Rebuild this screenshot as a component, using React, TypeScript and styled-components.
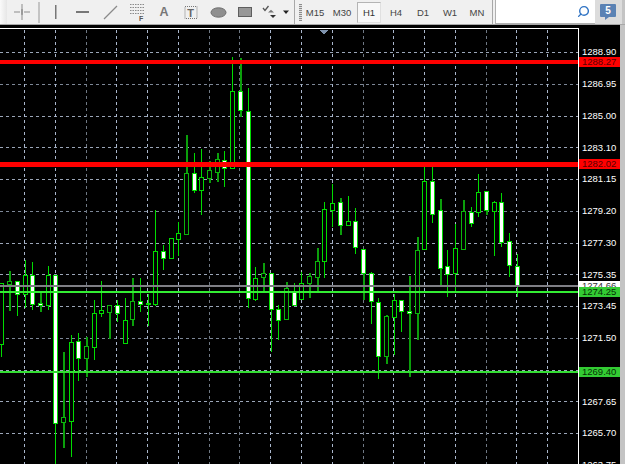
import React from "react";
import styled, { createGlobalStyle } from "styled-components";
import { Search } from "lucide-react";

const GlobalStyle = createGlobalStyle`
  html, body {
    margin: 0;
    padding: 0;
    background: #000;
  }
  body {
    font-family: "Liberation Sans", Arial, sans-serif;
  }
`;

const Page = styled.div`
  width: 625px;
  height: 464px;
  overflow: hidden;
  display: flex;
  flex-direction: column;
  background: #000;
`;

const Toolbar = styled.header`
  flex: none;
  height: 24px;
  display: flex;
  align-items: stretch;
  background: #f0f0f0;
  border-bottom: 1px solid #a8a8a8;
`;

const Gripper = styled.div`
  width: 7px;
  margin-right: 1px;
  background: linear-gradient(90deg, #fafafa, #e6e6e6);
`;

const ToolButton = styled.div<{ $w?: number }>`
  flex: none;
  width: ${({ $w }) => $w ?? 27}px;
  display: flex;
  align-items: center;
  justify-content: center;
`;

const Divider = styled.div`
  flex: none;
  width: 2px;
  margin: 2px 2.5px 1px 3px;
  background: #c4c4c4;
`;

const EdgeDivider = styled.div`
  flex: none;
  width: 1px;
  margin: 0 2px 0 1px;
  background: #a8a8a8;
`;

const DragDots = styled.div`
  flex: none;
  width: 3px;
  margin: 4px 0 3px 2px;
  background: repeating-linear-gradient(180deg, #8c8c8c 0 1px, #e2e2e2 1px 2px);
`;

const Period = styled.div<{ $active?: boolean }>`
  flex: none;
  width: 27px;
  display: flex;
  align-items: center;
  justify-content: center;
  font-size: 9.5px;
  color: #444;
  box-sizing: border-box;
  ${({ $active }) =>
    $active &&
    `
    width: 24px;
    margin: 2px 1.5px 1px;
    background: #f8f8f8;
    border: 1px solid #b4b4b4;
    border-right-color: #e0e0e0;
    border-bottom-color: #e0e0e0;
    color: #333;
  `}
`;

const SearchBox = styled.div`
  flex: none;
  width: 100px;
  box-sizing: border-box;
  display: flex;
  align-items: center;
  justify-content: flex-end;
  padding-right: 5px;
  background: #fff;
  border-left: 1px solid #b0b0b0;
  border-bottom: 1px solid #b0b0b0;
  color: #2f73c4;
`;

const NotifyButton = styled.div`
  flex: none;
  width: 27px;
  display: flex;
  align-items: center;
  justify-content: center;
  background: #dcdcdc;
`;

const Bubble = styled.div`
  position: relative;
  width: 16px;
  height: 13px;
  margin-bottom: 3px;
  border-radius: 1px;
  background: #5a82b4;
  color: #fff;
  font-size: 10px;
  font-weight: 700;
  line-height: 13px;
  text-align: center;
  &::after {
    content: "";
    position: absolute;
    left: 5px;
    bottom: -3px;
    border-top: 3px solid #5a82b4;
    border-right: 4px solid transparent;
  }
`;

const SideStrip = styled.div`
  flex: 1;
  background: #c4c4c4;
`;

const Workspace = styled.main`
  flex: 1;
  min-height: 0;
  display: flex;
  background: #000;
`;

const Plot = styled.div`
  flex: none;
  width: 579px;
  box-sizing: border-box;
  margin-top: 3px;
  border-top: 1px solid #fff;
  border-right: 1px solid #fff;
  overflow: hidden;
  svg {
    display: block;
  }
`;

const PriceAxis = styled.aside`
  position: relative;
  flex: none;
  width: 41px;
  box-sizing: border-box;
  padding-top: 11.1px;
  overflow: hidden;
`;

const Tick = styled.div`
  height: 31.75px;
  display: flex;
  align-items: center;
  padding-left: 3px;
  color: #fff;
  font-size: 9.5px;
`;

const PriceTag = styled.div<{ $bg: string; $fg: string }>`
  position: absolute;
  left: 0;
  right: 0;
  height: 10px;
  padding-left: 3px;
  background: ${({ $bg }) => $bg};
  color: ${({ $fg }) => $fg};
  font-size: 9.5px;
  line-height: 10px;
`;

const ScrollStrip = styled.div`
  flex: 1;
  background: #c4c4c4;
`;

const CrossIcon = () => (
  <svg width="16" height="16" viewBox="0 0 16 16" fill="none" stroke="#8c8c8c">
    <path d="M0 8H6M10 8H16M8 0V6M8 10V16" strokeWidth="1" />
    <path d="M8 5.5V10.5" stroke="#444" />
  </svg>
);

const VLineIcon = () => (
  <svg width="4" height="14" viewBox="0 0 4 14">
    <rect x="1" width="1.5" height="14" fill="#777" />
  </svg>
);

const HLineIcon = () => (
  <svg width="14" height="4" viewBox="0 0 14 4">
    <rect y="1" width="13" height="2" fill="#777" />
  </svg>
);

const TrendIcon = () => (
  <svg width="15" height="15" viewBox="0 0 15 15">
    <path d="M1 14L14 1" stroke="#8a8a8a" strokeWidth="1.3" />
  </svg>
);

const FiboIcon = () => (
  <svg width="16" height="18" viewBox="0 0 16 18">
    <path d="M1 1.5H15M1 4.5H15M1 7.5H15M1 10.5H15" stroke="#8a8a8a" strokeDasharray="1.5 1" />
    <text x="10" y="17.5" fontSize="7" fontWeight="700" fill="#555" fontFamily="Liberation Sans">
      F
    </text>
  </svg>
);

const LetterA = styled.span`
  font-size: 12.5px;
  font-weight: 700;
  color: #777;
`;

const LabelIcon = () => (
  <svg width="14" height="15" viewBox="0 0 14 15">
    <rect x="1" y="1.5" width="12" height="12" fill="none" stroke="#777" strokeDasharray="1 1" />
    <text x="3.3" y="11.5" fontSize="11" fontWeight="700" fill="#666" fontFamily="Liberation Sans">
      T
    </text>
  </svg>
);

const EllipseIcon = () => (
  <svg width="17" height="11" viewBox="0 0 17 11">
    <ellipse cx="8.5" cy="5.5" rx="7.5" ry="4.7" fill="#8f8f8f" stroke="#6e6e6e" />
  </svg>
);

const RectIcon = () => (
  <svg width="14" height="10" viewBox="0 0 14 10">
    <rect x="0.5" y="0.5" width="13" height="9" fill="#979797" stroke="#5e5e5e" />
  </svg>
);

const ArrowsIcon = () => (
  <svg width="28" height="14" viewBox="0 0 28 14">
    <path d="M1 3L3 5.5L6.5 1" fill="none" stroke="#555" strokeWidth="1.3" />
    <path d="M6 7.5L9 4.8L12 7.5Z" fill="#777" />
    <path d="M8 10L11 13L14 10Z" fill="#333" />
    <path d="M21 5.5H27L24 9Z" fill="#222" />
  </svg>
);

const verticals: [number, boolean][] = [
  [24.5, false], [55.5, false], [86, true], [116.5, false], [147.5, false], [178.5, false],
  [209, true], [239.5, true], [270.5, false], [301.5, false], [332, false], [363, true],
  [393.5, false], [424.5, false], [455, false], [486, true], [516.5, false], [547.5, false],
];

// [wick top, wick bottom, body top, body bottom, white body, dim wick]
type Candle = [number, number, number, number, number, number];
const candles: Candle[] = [
  [283, 357, 283, 344, 0, 0], [271, 311, 281, 284, 0, 1], [281, 316, 281, 294, 1, 0],
  [260, 308, 275, 294, 0, 0], [262, 310, 275, 304, 1, 0], [293, 312, 303, 305, 1, 1],
  [266, 310, 275, 305, 0, 0], [275, 464, 275, 423, 1, 0], [352, 448, 417, 422, 0, 1],
  [335, 457, 342, 421, 0, 0], [333, 381, 341, 358, 1, 0], [337, 377, 346, 358, 0, 1],
  [300, 360, 313, 347, 0, 0], [281, 317, 310, 313, 0, 0], [305, 339, 305, 312, 0, 1],
  [300, 322, 305, 313, 1, 0], [298, 344, 320, 343, 0, 0], [278, 326, 301, 319, 0, 1],
  [278, 312, 301, 304, 1, 0], [294, 326, 303, 303, 0, 0], [210, 306, 251, 304, 0, 0],
  [245, 270, 251, 258, 1, 0], [238, 258, 238, 258, 0, 0], [222, 256, 233, 239, 0, 0],
  [135, 235, 173, 234, 0, 1], [153, 193, 173, 190, 1, 0], [149, 215, 177, 190, 0, 0],
  [161, 183, 170, 178, 0, 1], [153, 182, 159, 172, 0, 1], [151, 187, 160, 168, 1, 0],
  [57, 168, 91, 168, 0, 0], [58, 117, 91, 110, 1, 1], [88, 308, 111, 298, 1, 0],
  [267, 301, 278, 299, 0, 0], [263, 292, 273, 277, 0, 1], [273, 352, 273, 309, 1, 0],
  [305, 340, 309, 320, 1, 0], [282, 319, 288, 319, 0, 1], [283, 305, 291, 305, 1, 0],
  [272, 299, 283, 299, 0, 0], [273, 298, 276, 283, 0, 1], [248, 292, 261, 277, 0, 1],
  [202, 278, 209, 261, 0, 0], [184, 227, 203, 210, 0, 0], [198, 235, 202, 225, 1, 1],
  [196, 225, 221, 225, 0, 0], [208, 254, 221, 247, 1, 0], [249, 300, 249, 273, 1, 1],
  [272, 324, 273, 301, 1, 0], [298, 379, 302, 356, 1, 0], [315, 364, 316, 356, 0, 1],
  [294, 355, 300, 317, 0, 0], [300, 332, 300, 311, 1, 0], [276, 377, 311, 313, 1, 1],
  [237, 340, 250, 313, 0, 1], [167, 250, 181, 249, 0, 0], [167, 223, 181, 214, 1, 0],
  [199, 287, 210, 268, 1, 1], [250, 297, 266, 274, 1, 0], [224, 292, 248, 273, 0, 0],
  [200, 250, 211, 249, 0, 1], [207, 227, 212, 223, 1, 0], [174, 217, 192, 212, 0, 0],
  [191, 215, 191, 210, 1, 1], [201, 256, 202, 211, 0, 0], [193, 247, 202, 242, 1, 0],
  [233, 277, 241, 265, 1, 0], [254, 297, 266, 286, 1, 0],
];

// the row at 1269.xx sits under its price tag, so it stays empty
const ticks = [
  "1288.90", "1286.95", "1285.00", "1283.10", "1281.15", "1279.20", "1277.30",
  "1275.35", "1273.45", "1271.50", "", "1267.65", "1265.70", "1263.75",
];

const tags = [
  { price: "1288.27", y: 62, bg: "#ff0000", fg: "#5a0000" },
  { price: "1282.02", y: 164, bg: "#ff0000", fg: "#5a0000" },
  { price: "1274.66", y: 286, bg: "#ffffff", fg: "#333333" },
  { price: "1274.25", y: 292, bg: "#33cc33", fg: "#053005" },
  { price: "1269.40", y: 372, bg: "#33cc33", fg: "#053005" },
];

const candleX = (i: number) => Math.round(55.3 + 7.69 * (i - 7)) + 0.5;

function ChartCanvas() {
  const rows = Array.from({ length: 14 }, (_, n) => 52.5 + Math.round(31.75 * n));
  return (
    <svg width="578" height="435" viewBox="0 29 578 435" shapeRendering="crispEdges">
      <g strokeDasharray="3 3">
        {rows.map((y, n) => (
          <line key={y} x1="0" x2="578" y1={y} y2={y} stroke={n % 4 === 1 ? "#7d8797" : "#9ba6b8"} />
        ))}
        {verticals.map(([x, dim]) => (
          <line key={x} x1={x} x2={x} y1="30" y2="464" stroke={dim ? "#6f7884" : "#a9b6cc"} />
        ))}
      </g>
      {candles.map(([top, bottom, bodyTop, bodyBottom, white, dim], i) => {
        const x = candleX(i);
        return (
          <g key={i}>
            <line
              x1={x}
              x2={x}
              y1={top}
              y2={bottom}
              stroke={dim ? "#0b9f0b" : "#00dc00"}
              strokeWidth={dim ? 2 : 1}
            />
            <rect
              x={x - 2}
              y={bodyTop + 0.5}
              width="4"
              height={Math.max(bodyBottom - bodyTop, 1)}
              fill={white ? "#ffffff" : "#000000"}
              stroke={dim && !white ? "#0bb40b" : "#00dc00"}
            />
          </g>
        );
      })}
      <rect x="0" y="285" width="578" height="2" fill="#7f7f85" />
      <rect x="0" y="291" width="578" height="2" fill="#33ee33" />
      <rect x="0" y="371" width="578" height="2" fill="#33dd33" />
      <rect x="0" y="60" width="578" height="4" fill="#ff0000" />
      <rect x="0" y="162" width="578" height="5" fill="#ff0000" />
      <path d="M319 30H329L324 34.5Z" fill="#7f93ad" />
    </svg>
  );
}

export default function App() {
  return (
    <>
      <GlobalStyle />
      <Page>
        <Toolbar>
          <Gripper />
          <ToolButton>
            <CrossIcon />
          </ToolButton>
          <Divider />
          <ToolButton>
            <VLineIcon />
          </ToolButton>
          <ToolButton>
            <HLineIcon />
          </ToolButton>
          <ToolButton>
            <TrendIcon />
          </ToolButton>
          <ToolButton>
            <FiboIcon />
          </ToolButton>
          <ToolButton>
            <LetterA>A</LetterA>
          </ToolButton>
          <ToolButton>
            <LabelIcon />
          </ToolButton>
          <ToolButton>
            <EllipseIcon />
          </ToolButton>
          <ToolButton>
            <RectIcon />
          </ToolButton>
          <ToolButton $w={34}>
            <ArrowsIcon />
          </ToolButton>
          <EdgeDivider />
          <DragDots />
          <Period>M15</Period>
          <Period>M30</Period>
          <Period $active>H1</Period>
          <Period>H4</Period>
          <Period>D1</Period>
          <Period>W1</Period>
          <Period>MN</Period>
          <EdgeDivider />
          <SearchBox>
            <Search size={13} strokeWidth={2.6} style={{ transform: "scaleX(-1)" }} />
          </SearchBox>
          <NotifyButton>
            <Bubble>5</Bubble>
          </NotifyButton>
          <SideStrip />
        </Toolbar>
        <Workspace>
          <Plot>
            <ChartCanvas />
          </Plot>
          <PriceAxis>
            {ticks.map((t, n) => (
              <Tick key={n}>{t}</Tick>
            ))}
            {tags.map((t) => (
              <PriceTag key={t.price} $bg={t.bg} $fg={t.fg} style={{ top: t.y - 25 - 5 }}>
                {t.price}
              </PriceTag>
            ))}
          </PriceAxis>
          <ScrollStrip />
        </Workspace>
      </Page>
    </>
  );
}
